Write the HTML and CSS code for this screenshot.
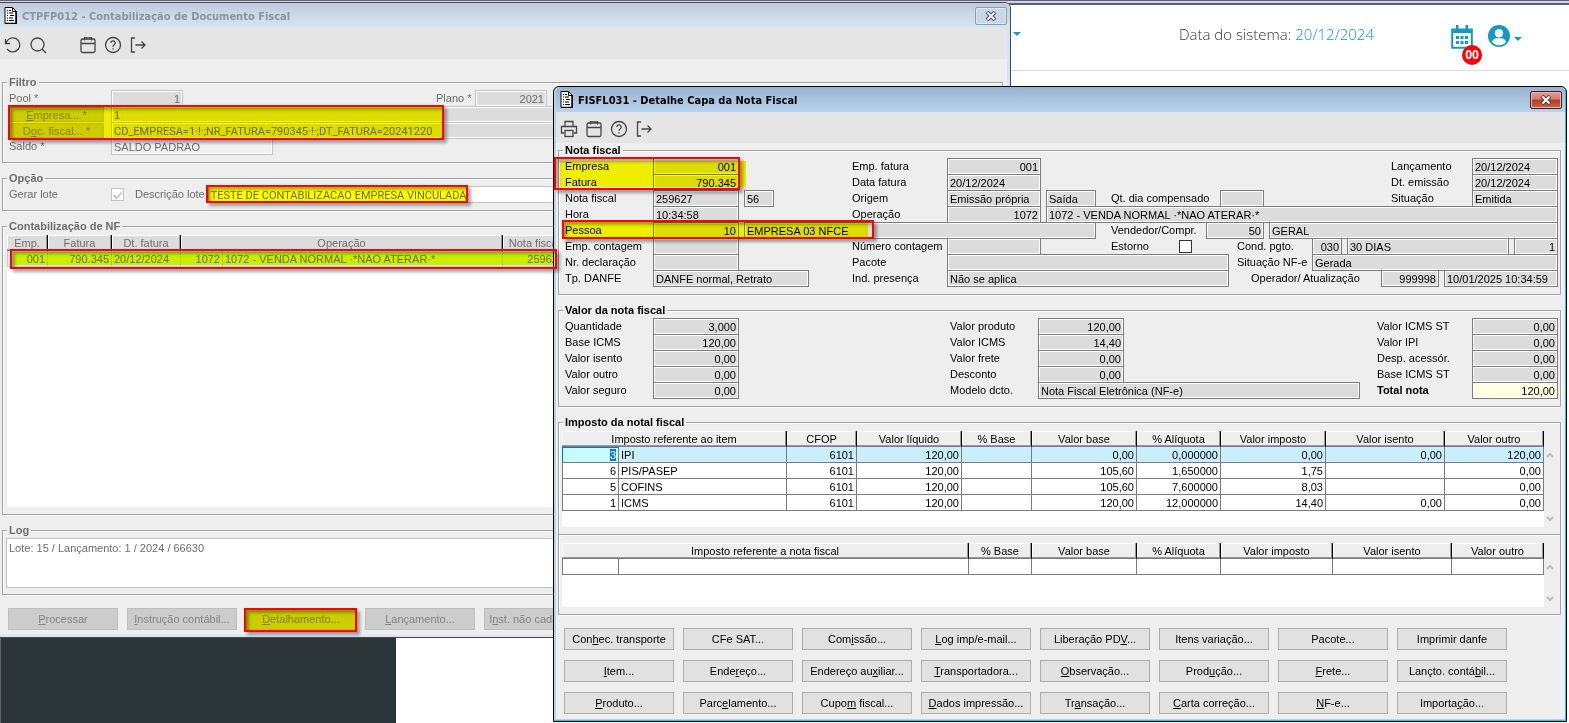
FILE: index.html
```html
<!DOCTYPE html>
<html lang="pt-BR">
<head>
<meta charset="UTF-8">
<meta name="viewport" content="width=device-width, initial-scale=1.0">
<title>FISFL031 - Detalhe Capa da Nota Fiscal</title>
<link rel="stylesheet" href="styles.css">
</head>
<body>
<svg class="sprite" aria-hidden="true">
<symbol id="i-doc" viewBox="0 0 13 17"><path d="M1 .5h7.500l4 4v12H1z" fill="#fff" stroke="#000"/><path d="M12 4v12.500H1" fill="none" stroke="#000" stroke-width="1.500"/><path d="M8.500 1v3.500h4" fill="none" stroke="#000"/><path d="M3 3.500h1M5 3.500h2M3 6h1M5 6h4M3 8.500h1M6 8.500h4M3 11h1M5 11h4M3 13.500h1M5 13.500h5" stroke="#000" stroke-width="1.200"/></symbol>
<symbol id="i-undo" viewBox="0 0 18 18"><path d="M1.500 3v4.500H6M2 7.200A7 7 0 1 1 3 12.800"/></symbol>
<symbol id="i-search" viewBox="0 0 18 18"><circle cx="8.500" cy="8.500" r="6.500"/><path d="M13.200 13.200 17 17"/></symbol>
<symbol id="i-cal" viewBox="0 0 18 18"><rect x="2" y="3" width="14" height="13.500" rx="1.500"/><path d="M2 7.500h14M5.500 1v3.500M12.500 1v3.500M5.500 2h7"/></symbol>
<symbol id="i-help" viewBox="0 0 18 18"><circle cx="9" cy="9" r="7.500"/><path d="M6.800 7a2.200 2.200 0 1 1 3.200 2c-.8.500-1 .8-1 1.700M9 12.200v1.200"/></symbol>
<symbol id="i-exit" viewBox="0 0 18 18"><path d="M6 2H2.500v14H6M6.500 9H16M12.500 5.500 16 9l-3.500 3.500"/></symbol>
<symbol id="i-print" viewBox="0 0 18 18"><path d="M5 6V1.500h8V6M4.500 13H1.500V6.500h15V13h-3"/><rect x="5" y="10.500" width="8" height="6"/></symbol>
<symbol id="i-up" viewBox="0 0 8 6"><path d="M1 5l3-3 3 3" fill="none" stroke="#bdbdbd" stroke-width="2"/></symbol>
<symbol id="i-down" viewBox="0 0 8 6"><path d="M1 1l3 3 3-3" fill="none" stroke="#bdbdbd" stroke-width="2"/></symbol>
</svg>

<header class="topbar">
<button class="caret-btn menu-caret" aria-label="Menu"><svg width="8" height="4" viewBox="0 0 8 4"><path d="M0 0h8L4 4z" fill="#129abf"/></svg></button>
<p class="sysdate">Data do sistema: <span>20/12/2024</span></p>
<button class="agenda" aria-label="Agenda">
<svg width="22" height="24" viewBox="0 0 22 24"><path d="M1.200 4.500h19.600V22.800H1.200z" fill="#fff" stroke="#129abf" stroke-width="2"/><path d="M1 4h20v4H1zM5 0h2.500v4H5zM14.500 0H17v4h-2.500z" fill="#129abf"/><path d="M5 11h3v3H5zm4.500 0h3v3h-3zM14 11h3v3h-3zM5 16h3v3H5zm4.500 0h3v3h-3zM14 16h3v3h-3z" fill="#129abf"/></svg>
<span class="badge">00</span>
</button>
<button class="user" aria-label="Usuário">
<svg width="22" height="22" viewBox="0 0 22 22"><circle cx="11" cy="11" r="11" fill="#129abf"/><circle cx="11" cy="8.300" r="4.200" fill="#fff"/><path d="M4 17c.8-3 3-3.800 4.600-3.800h4.800c1.600 0 3.800.8 4.600 3.800A9.200 9.200 0 0 1 4 17z" fill="#fff"/></svg>
<svg class="user-caret" width="8" height="4" viewBox="0 0 8 4"><path d="M0 0h8L4 4z" fill="#129abf"/></svg>
</button>
</header>
<aside class="sidebar"></aside>

<!-- CTPFP012 -->
<section class="window win-back">
<div class="titlebar">
<svg width="13" height="17"><use href="#i-doc"/></svg>
<h1>CTPFP012 - Contabilização de Documento Fiscal</h1>
<button class="close" aria-label="Fechar"><svg width="12" height="10" viewBox="0 0 12 10"><path d="M2 1l8 8M10 1L2 9" stroke="#555" stroke-width="4"/><path d="M2.500 1.500l7 7M9.500 1.500l-7 7" stroke="#eef" stroke-width="2"/></svg></button>
</div>
<div class="toolbar">
<button aria-label="Desfazer"><svg><use href="#i-undo"/></svg></button>
<button aria-label="Pesquisar"><svg><use href="#i-search"/></svg></button>
<span class="tool-gap"></span>
<button aria-label="Calendário"><svg><use href="#i-cal"/></svg></button>
<button aria-label="Ajuda"><svg><use href="#i-help"/></svg></button>
<button aria-label="Sair"><svg><use href="#i-exit"/></svg></button>
</div>
<div class="win-body">
<fieldset>
<legend>Filtro</legend>
<div class="row">
<label class="item filter-pool"><span class="cap">Pool *</span><input class="w72 num" value="1" readonly></label>
<label class="item"><span class="cap-plano">Plano *</span><input class="w72 num" value="2021" readonly></label>
</div>
<div class="row"><span class="cap"><button class="lookup"><u>E</u>mpresa... *</button></span><input class="grow" aria-label="Empresa" value="1" readonly></div>
<div class="row"><span class="cap"><button class="lookup">D<u>o</u>c. fiscal... *</button></span><input class="grow long" aria-label="Doc. fiscal" value="CD_EMPRESA=1·!·;NR_FATURA=790345·!·;DT_FATURA=20241220" readonly></div>
<div class="row"><label class="item"><span class="cap">Saldo *</span><input class="w162 light" value="SALDO PADRAO" readonly></label></div>
</fieldset>
<fieldset>
<legend>Opção</legend>
<div class="row">
<label class="item"><span class="cap">Gerar lote</span><input type="checkbox" class="check" checked></label>
<label class="item grow desc"><span>Descrição lote</span><input class="grow white long" value="TESTE DE CONTABILIZACAO EMPRESA VINCULADA"></label>
</div>
</fieldset>
<fieldset class="nf-list">
<legend>Contabilização de NF</legend>
<div class="table-wrap">
<table class="list">
<colgroup><col class="c41"><col class="c64"><col class="c69"><col class="c42"><col class="c280"><col class="c64"><col></colgroup>
<thead><tr><th>Emp.</th><th>Fatura</th><th>Dt. fatura</th><th colspan="2">Operação</th><th>Nota fiscal</th><th></th></tr></thead>
<tbody><tr class="sel"><td class="num">001</td><td class="num">790.345</td><td>20/12/2024</td><td class="num">1072</td><td>1072 - VENDA NORMAL ·*NAO ATERAR·*</td><td class="num">259627</td><td></td></tr></tbody>
</table>
</div>
</fieldset>
<fieldset class="log-group">
<legend>Log</legend>
<textarea class="log" aria-label="Log" readonly>Lote: 15 / Lançamento: 1 / 2024 / 66630</textarea>
</fieldset>
<div class="actions">
<button><u>P</u>rocessar</button>
<button><u>I</u>nstrução contábil...</button>
<button><u>D</u>etalhamento...</button>
<button><u>L</u>ançamento...</button>
<button>I<u>n</u>st. não cadastrada</button>
</div>
</div>
</section>

<!-- FISFL031 -->
<section class="window win-front">
<div class="titlebar">
<svg width="13" height="17"><use href="#i-doc"/></svg>
<h1>FISFL031 - Detalhe Capa da Nota Fiscal</h1>
<button class="close" aria-label="Fechar"><svg width="12" height="10" viewBox="0 0 12 10"><path d="M2 1l8 8M10 1L2 9" stroke="#5b3a44" stroke-width="4"/><path d="M2.500 1.500l7 7M9.500 1.500l-7 7" stroke="#fff" stroke-width="2"/></svg></button>
</div>
<div class="toolbar">
<button aria-label="Imprimir"><svg><use href="#i-print"/></svg></button>
<button aria-label="Calendário"><svg><use href="#i-cal"/></svg></button>
<button aria-label="Ajuda"><svg><use href="#i-help"/></svg></button>
<button aria-label="Sair"><svg><use href="#i-exit"/></svg></button>
</div>
<div class="win-body">
<fieldset>
<legend>Nota fiscal</legend>
<div class="row">
<div class="cell-a"><label class="item"><span class="cap">Empresa</span><input class="w86 num" value="001" readonly></label></div>
<div class="cell-b"><label class="item"><span class="cap">Emp. fatura</span><input class="w94 num" value="001" readonly></label></div>
<div class="cell-c"><label class="item end"><span class="cap-date">Lançamento</span><input class="w86" value="20/12/2024" readonly></label></div>
</div>
<div class="row">
<div class="cell-a"><label class="item"><span class="cap">Fatura</span><input class="w86 num" value="790.345" readonly></label></div>
<div class="cell-b"><label class="item"><span class="cap">Data fatura</span><input class="w94" value="20/12/2024" readonly></label></div>
<div class="cell-c"><label class="item end"><span class="cap-date">Dt. emissão</span><input class="w86" value="20/12/2024" readonly></label></div>
</div>
<div class="row">
<div class="cell-a"><label class="item"><span class="cap">Nota fiscal</span><input class="w86" value="259627" readonly></label><input class="w30" aria-label="Série" value="56" readonly></div>
<div class="cell-b"><label class="item"><span class="cap">Origem</span><input class="w94" value="Emissão própria" readonly></label><input class="w50" aria-label="Tipo" value="Saída" readonly></div>
<div class="cell-c"><label class="item"><span class="cap-dia">Qt. dia compensado</span><input class="w44" value="" readonly></label><label class="item end"><span class="cap-date">Situação</span><input class="w86" value="Emitida" readonly></label></div>
</div>
<div class="row">
<div class="cell-a"><label class="item"><span class="cap">Hora</span><input class="w86" value="10:34:58" readonly></label></div>
<div class="cell-b grow"><label class="item"><span class="cap">Operação</span><input class="w94 num" value="1072" readonly></label><input class="grow" aria-label="Descrição da operação" value="1072 - VENDA NORMAL ·*NAO ATERAR·*" readonly></div>
</div>
<div class="row">
<div class="cell-ab"><label class="item"><span class="cap">Pessoa</span><input class="w86 num" value="10" readonly></label><input class="w352" aria-label="Nome da pessoa" value="EMPRESA 03 NFCE" readonly></div>
<div class="cell-c"><label class="item"><span class="cap-vend">Vendedor/Compr.</span><input class="w58 num" value="50" readonly></label><input class="grow" aria-label="Nome do vendedor" value="GERAL" readonly></div>
</div>
<div class="row">
<div class="cell-a"><label class="item"><span class="cap">Emp. contagem</span><input class="w86" value="" readonly></label></div>
<div class="cell-b"><label class="item"><span class="cap">Número contagem</span><input class="w94" value="" readonly></label></div>
<div class="cell-c"><label class="item"><span class="cap-est">Estorno</span><input type="checkbox" class="check"></label><label class="item end"><span class="cap-nfe">Cond. pgto.</span><input class="w30 num" value="030" readonly></label><input class="w162" aria-label="Descrição da condição" value="30 DIAS" readonly><input class="w44 num" aria-label="Parcelas" value="1" readonly></div>
</div>
<div class="row">
<div class="cell-a"><label class="item"><span class="cap">Nr. declaração</span><input class="w86" value="" readonly></label></div>
<div class="cell-b grow"><label class="item"><span class="cap">Pacote</span><input class="w282" value="" readonly></label><label class="item end"><span class="cap-nfe">Situação NF-e</span><input class="w246" value="Gerada" readonly></label></div>
</div>
<div class="row">
<div class="cell-a"><label class="item"><span class="cap">Tp. DANFE</span><input class="w156" value="DANFE normal, Retrato" readonly></label></div>
<div class="cell-b grow"><label class="item"><span class="cap">Ind. presença</span><input class="w282" value="Não se aplica" readonly></label><label class="item end"><span class="cap-oper">Operador/ Atualização</span><input class="w58 num" value="999998" readonly></label><input class="w114" aria-label="Atualização" value="10/01/2025 10:34:59" readonly></div>
</div>
</fieldset>

<fieldset>
<legend>Valor da nota fiscal</legend>
<div class="values">
<div class="value-col">
<label class="item"><span class="cap">Quantidade</span><input class="w86 num" value="3,000" readonly></label>
<label class="item"><span class="cap">Base ICMS</span><input class="w86 num" value="120,00" readonly></label>
<label class="item"><span class="cap">Valor isento</span><input class="w86 num" value="0,00" readonly></label>
<label class="item"><span class="cap">Valor outro</span><input class="w86 num" value="0,00" readonly></label>
<label class="item"><span class="cap">Valor seguro</span><input class="w86 num" value="0,00" readonly></label>
</div>
<div class="value-col">
<label class="item"><span class="cap">Valor produto</span><input class="w86 num" value="120,00" readonly></label>
<label class="item"><span class="cap">Valor ICMS</span><input class="w86 num" value="14,40" readonly></label>
<label class="item"><span class="cap">Valor frete</span><input class="w86 num" value="0,00" readonly></label>
<label class="item"><span class="cap">Desconto</span><input class="w86 num" value="0,00" readonly></label>
<label class="item"><span class="cap">Modelo dcto.</span><input class="w322" value="Nota Fiscal Eletrônica (NF-e)" readonly></label>
</div>
<div class="value-col end">
<label class="item"><span class="cap-total">Valor ICMS ST</span><input class="w86 num" value="0,00" readonly></label>
<label class="item"><span class="cap-total">Valor IPI</span><input class="w86 num" value="0,00" readonly></label>
<label class="item"><span class="cap-total">Desp. acessór.</span><input class="w86 num" value="0,00" readonly></label>
<label class="item"><span class="cap-total">Base ICMS ST</span><input class="w86 num" value="0,00" readonly></label>
<label class="item"><span class="cap-total"><b>Total nota</b></span><input class="w86 num total" value="120,00" readonly></label>
</div>
</div>
</fieldset>

<fieldset class="taxes">
<legend>Imposto da notal fiscal</legend>
<div class="grid-area">
<div class="table-wrap tall">
<table>
<colgroup><col class="c57"><col class="c168"><col class="c70"><col class="c105"><col class="c70"><col class="c105"><col class="c84"><col class="c105"><col class="c119"><col></colgroup>
<thead><tr><th colspan="2">Imposto referente ao item</th><th>CFOP</th><th>Valor líquido</th><th>% Base</th><th>Valor base</th><th>% Alíquota</th><th>Valor imposto</th><th>Valor isento</th><th>Valor outro</th></tr></thead>
<tbody>
<tr class="sel"><td class="num current"><mark>3</mark></td><td>IPI</td><td class="num">6101</td><td class="num">120,00</td><td></td><td class="num">0,00</td><td class="num">0,000000</td><td class="num">0,00</td><td class="num">0,00</td><td class="num">120,00</td></tr>
<tr><td class="num">6</td><td>PIS/PASEP</td><td class="num">6101</td><td class="num">120,00</td><td></td><td class="num">105,60</td><td class="num">1,650000</td><td class="num">1,75</td><td></td><td class="num">0,00</td></tr>
<tr><td class="num">5</td><td>COFINS</td><td class="num">6101</td><td class="num">120,00</td><td></td><td class="num">105,60</td><td class="num">7,600000</td><td class="num">8,03</td><td></td><td class="num">0,00</td></tr>
<tr><td class="num">1</td><td>ICMS</td><td class="num">6101</td><td class="num">120,00</td><td></td><td class="num">120,00</td><td class="num">12,000000</td><td class="num">14,40</td><td class="num">0,00</td><td class="num">0,00</td></tr>
</tbody>
</table>
</div>
<div class="scroller"><svg width="8" height="6"><use href="#i-up"/></svg><svg width="8" height="6"><use href="#i-down"/></svg></div>
</div>
<hr>
<div class="grid-area">
<div class="table-wrap short">
<table>
<colgroup><col class="c57"><col class="c350"><col class="c63"><col class="c105"><col class="c84"><col class="c112"><col class="c119"><col></colgroup>
<thead><tr><th colspan="2">Imposto referente a nota fiscal</th><th>% Base</th><th>Valor base</th><th>% Alíquota</th><th>Valor imposto</th><th>Valor isento</th><th>Valor outro</th></tr></thead>
<tbody><tr><td></td><td></td><td></td><td></td><td></td><td></td><td></td><td></td></tr></tbody>
</table>
</div>
<div class="scroller"><svg width="8" height="6"><use href="#i-up"/></svg><svg width="8" height="6"><use href="#i-down"/></svg></div>
</div>
</fieldset>

<div class="actions">
<button>Con<u>h</u>ec. transporte</button>
<button>CFe SAT...</button>
<button>Com<u>i</u>ssão...</button>
<button><u>L</u>og imp/e-mail...</button>
<button>Liberação PD<u>V</u>...</button>
<button>Itens variação...</button>
<button>Pacote...</button>
<button>Imprimir danfe</button>
<button><u>I</u>tem...</button>
<button>Ende<u>r</u>eço...</button>
<button>Endereço au<u>x</u>iliar...</button>
<button><u>T</u>ransportadora...</button>
<button><u>O</u>bservação...</button>
<button>Prod<u>u</u>ção...</button>
<button><u>F</u>rete...</button>
<button>Lançto. contá<u>b</u>il...</button>
<button><u>P</u>roduto...</button>
<button>Parc<u>e</u>lamento...</button>
<button>Cupo<u>m</u> fiscal...</button>
<button><u>D</u>ados impressão...</button>
<button>Tr<u>a</u>nsação...</button>
<button><u>C</u>arta correção...</button>
<button><u>N</u>F-e...</button>
<button>Importa<u>ç</u>ão...</button>
</div>
</div>
</section>

<!-- marker pen and red boxes -->
<div class="marker m-filter"></div><div class="redbox r-filter"></div>
<div class="marker m-desc"></div><div class="redbox r-desc"></div>
<div class="marker m-line"></div><div class="redbox r-line"></div>
<div class="marker m-detail"></div><div class="redbox r-detail"></div>
<div class="marker m-fatura"></div><div class="redbox r-fatura"></div>
<div class="marker m-pessoa"></div><div class="redbox r-pessoa"></div>
</body>
</html>
```
FILE: styles.css
```css
* {
box-sizing: border-box;
}
body {
margin: 0;
min-height: 100vh;
position: relative;
overflow: hidden;
background: #fff;
color: #000;
font: 11px/16px "Liberation Sans", Arial, sans-serif;
}
button, input, textarea {
font: inherit;
color: inherit;
margin: 0;
border-radius: 0;
}
button {
padding: 0;
border: 0;
background: none;
}
.sprite {
position: absolute;
width: 0;
height: 0;
}

/* page behind the windows */
.topbar {
display: flex;
align-items: flex-start;
height: 71px;
padding: 21px 47px 0 1013px;
background: #fff;
border-top: 1px solid #66666e;
border-bottom: 1px solid #ddd;
box-shadow: inset 0 2px 0 #cfd2ee, inset 0 4px 0 #5f6068;
}
.topbar svg {
display: block;
}
.menu-caret {
padding-top: 10px;
}
.sysdate {
margin: 0 77px 0 auto;
font: 300 15px/24px "Open Sans", "Noto Sans", sans-serif;
color: #333;
}
.sysdate span {
color: #129abf;
}
.agenda {
position: relative;
margin: 3px 15px 0 0;
}
.badge {
position: absolute;
left: 11px;
top: 20px;
width: 20px;
height: 20px;
border-radius: 50%;
background: #f00;
color: #fff;
font: bold 12px/20px "Open Sans", sans-serif;
}
.user {
display: flex;
align-items: center;
gap: 4px;
padding-top: 3px;
}
.user-caret {
margin-top: 5px;
}
.sidebar {
position: absolute;
left: 0;
top: 600px;
bottom: 0;
width: 396px;
background: #2c3639;
border-left: 1px solid #666;
}

/* windows */
.window {
position: absolute;
border: 1px solid #222;
background: #d5e4f2;
}
.win-back {
left: -1px;
top: 2px;
width: 1012px;
padding: 0 3px 2px 0;
border-color: #4a4a50;
border-radius: 0 6px 0 0;
color: #6d6d6d;
}
.win-front {
left: 553px;
right: 2px;
top: 86px;
padding: 0 1px 2px 2px;
border-color: #000;
border-radius: 6px 6px 0 0;
background: #b9d1ea;
box-shadow: inset -1px -1px 0 #2cc4e6;
}
.titlebar {
display: flex;
align-items: center;
height: 25px;
padding: 0 3px 0 4px;
background: linear-gradient(#99b4d1, #b9d3ec);
}
.win-back .titlebar {
margin-right: -3px;
background: linear-gradient(#bfcddb, #d7e4f2);
border-radius: 0 5px 0 0;
}
.win-front .titlebar {
border-radius: 5px 5px 0 0;
}
.titlebar h1 {
margin: 0 auto 0 5px;
padding-top: 2px;
font: bold 11px/16px "DejaVu Sans Condensed", "Noto Sans", sans-serif;
}
.win-back h1 {
color: #8d949c;
}
.close {
display: flex;
align-items: center;
justify-content: center;
width: 32px;
height: 18px;
border: 1px solid #4b1a24;
border-radius: 2px;
background: linear-gradient(#e3a196, #d07c6c 45%, #b53a22 50%, #c8634c);
box-shadow: inset 0 0 0 1px #e6b5ac;
}
.win-back .close {
border-color: #8e9aab;
background: #c9d7e6;
box-shadow: inset 0 0 0 1px #dce6f0;
}
.toolbar {
display: flex;
align-items: center;
gap: 7px;
height: 31px;
padding: 2px 4px 0;
background: #e5e5e5;
}
.toolbar button {
width: 18px;
height: 18px;
}
.toolbar svg {
display: block;
width: 18px;
height: 18px;
fill: none;
stroke: #444;
stroke-width: 1.3;
}
.tool-gap {
width: 18px;
}
.win-body {
display: flex;
flex-direction: column;
gap: 9px;
padding: 1px 4px 5px 2px;
background: #eee;
}
.win-back .win-body {
padding-top: 17px;
}

/* groups */
fieldset {
min-width: 0;
margin: 0;
padding: 1px 2px 8px 6px;
border: 1px solid #a0a0a0;
box-shadow: 1px 1px 0 #fff, inset 1px 1px 0 #fff;
}
legend {
height: 13px;
margin-left: -2px;
padding: 0 2px;
background: #eee;
font-weight: bold;
line-height: 13px;
}
.row, .item, .cell-a, .cell-b, .cell-c, .cell-ab {
display: flex;
height: 16px;
align-items: flex-start;
}
.item > span, .cap {
flex: none;
white-space: nowrap;
}
.cell-a {
width: 287px;
gap: 5px;
}
.cell-b {
width: 259px;
gap: 5px;
}
.cell-ab {
width: 546px;
gap: 5px;
}
.cell-c {
flex: 1;
gap: 5px;
}
.grow {
flex: 1;
}
.end {
margin-left: auto;
}
.cell-a .cap, .cell-ab .cap, .value-col .cap {
width: 88px;
}
.cell-b .cap {
width: 95px;
}
.cap-date {
width: 81px;
}
.cap-dia {
width: 109px;
}
.cap-vend {
width: 95px;
}
.cap-est {
width: 68px;
}
.cap-nfe {
width: 75px;
}
.cap-oper {
width: 130px;
}
.cap-total {
width: 95px;
}
.win-back .cap {
width: 102px;
}
.cap-plano {
width: 39px;
}
.filter-pool {
width: 427px;
}
.desc {
margin-left: 11px;
gap: 3px;
}
input {
min-width: 0;
height: 17px;
padding: 1px 2px 0;
border: 1px solid #7c7c7c;
background: #dcdcdc;
box-shadow: inset 0 0 0 1px #fff;
outline: none;
}
.win-back input {
border-color: #c3c3c3;
}
input.long {
font-family: Roboto, "Liberation Sans", sans-serif;
}
.num {
text-align: right;
}
.w30 { width: 30px; }
.w44 { width: 44px; }
.w50 { width: 50px; }
.w58 { width: 58px; }
.w72 { width: 72px; }
.w86 { width: 86px; }
.w94 { width: 94px; }
.w114 { width: 114px; }
.w156 { width: 156px; }
.w162 { width: 162px; }
.w246 { width: 246px; }
.w282 { width: 282px; }
.w322 { width: 322px; }
.w352 { width: 352px; }
input.light {
background: #f0f0f0;
}
input.white {
background: #fff;
}
input.total {
background: #ffffe1;
}
.check {
appearance: none;
width: 13px;
height: 13px;
margin-top: 2px;
padding: 0;
border: 1px solid #333;
background: #fff;
}
.check:checked::after {
content: "";
display: block;
width: 4px;
height: 7px;
margin: 1px 0 0 3px;
border: solid #aaa;
border-width: 0 1px 1px 0;
transform: rotate(40deg);
}
.lookup {
display: block;
width: 95px;
height: 15px;
margin-top: 1px;
padding-top: 1px;
border: 1px solid #bbb;
background: #ccc;
color: #838383;
line-height: 12px;
}

/* values */
.values {
display: flex;
}
.value-col:first-child {
width: 385px;
}

/* tables */
.table-wrap {
flex: 1;
background: #fff;
}
.nf-list {
padding: 2px 2px 7px 4px;
}
.nf-list .table-wrap {
height: 272px;
}
.taxes {
padding: 2px 2px 7px 3px;
}
.nf-list legend {
margin-left: 0;
}
.taxes legend, .log-group legend {
margin-left: 1px;
}
.grid-area {
display: flex;
}
.tall {
height: 96px;
}
.short {
height: 64px;
}
.taxes hr {
height: 2px;
margin: 7px -2px 7px -3px;
border: 0;
border-top: 1px solid #a0a0a0;
background: #fff;
}
.scroller {
display: flex;
flex-direction: column;
justify-content: space-between;
width: 14px;
padding: 21px 0 5px 2px;
}
table {
width: 100%;
table-layout: fixed;
border-collapse: separate;
border-spacing: 0;
}
th {
height: 16px;
padding: 2px 0 0;
background: #eee;
border-right: 1px solid #000;
border-bottom: 1px solid #7c7c7c;
box-shadow: inset -1px -1px 0 #999, inset 1px 1px 0 #fff;
font-weight: normal;
line-height: 13px;
}
td {
height: 16px;
padding: 2px 2px 0;
border-right: 1px solid #7c7c7c;
border-bottom: 1px solid #7c7c7c;
line-height: 13px;
white-space: nowrap;
overflow: hidden;
}
td:first-child {
border-left: 1px solid #7c7c7c;
}
.sel td {
background: #c9eefd;
}
.sel td.current {
background: #c8fbff;
border-left-color: #0078d7;
box-shadow: inset 0 1px 0 #0078d7;
}
mark {
background: #0078d7;
color: #fff;
}
.list th {
background: #dcdcdc;
}
.list td {
border-color: #c8c8c8;
}
.c41 { width: 41px; }
.c42 { width: 42px; }
.c57 { width: 57px; }
.c63 { width: 63px; }
.c64 { width: 64px; }
.c69 { width: 69px; }
.c70 { width: 70px; }
.c84 { width: 84px; }
.c105 { width: 105px; }
.c112 { width: 112px; }
.c119 { width: 119px; }
.c168 { width: 168px; }
.c280 { width: 280px; }
.c350 { width: 350px; }
.log {
display: block;
width: 100%;
height: 50px;
padding: 1px 2px;
border: 1px solid #c3c3c3;
background: #fff;
resize: none;
outline: none;
}
.log-group {
padding: 1px 2px 6px 3px;
}

/* bottom buttons */
.actions {
display: grid;
grid-template-columns: repeat(auto-fill, 110px);
gap: 10px 9px;
padding: 4px 6px 0;
}
.actions button {
height: 22px;
border: 1px solid #adadad;
background: #e1e1e1;
}
.win-back .actions button {
border-color: #bfbfbf;
background: #ccc;
color: #838383;
}

/* annotations drawn over the windows */
.marker {
position: absolute;
background: #ff0;
mix-blend-mode: multiply;
}
.redbox {
position: absolute;
border: 2px solid #f00;
box-shadow: 3px 3px 3px rgba(0, 0, 0, .35), inset 3px 3px 3px rgba(0, 0, 0, .3);
}
.m-filter { left: 10px; top: 107px; width: 433px; height: 32px; }
.r-filter { left: 8px; top: 105px; width: 436px; height: 35px; }
.m-desc { left: 208px; top: 187px; width: 260px; height: 16px; }
.r-desc { left: 206px; top: 185px; width: 262px; height: 18px; }
.m-line { left: 13px; top: 252px; width: 540px; height: 13px; }
.r-line { left: 10px; top: 249px; width: 547px; height: 20px; }
.m-detail { left: 246px; top: 610px; width: 110px; height: 20px; }
.r-detail { left: 244px; top: 608px; width: 113px; height: 24px; }
.m-fatura { left: 560px; top: 161px; width: 186px; height: 26px; }
.r-fatura { left: 554px; top: 157px; width: 186px; height: 33px; }
.m-pessoa { left: 564px; top: 222px; width: 304px; height: 16px; }
.r-pessoa { left: 562px; top: 220px; width: 312px; height: 19px; }
```
